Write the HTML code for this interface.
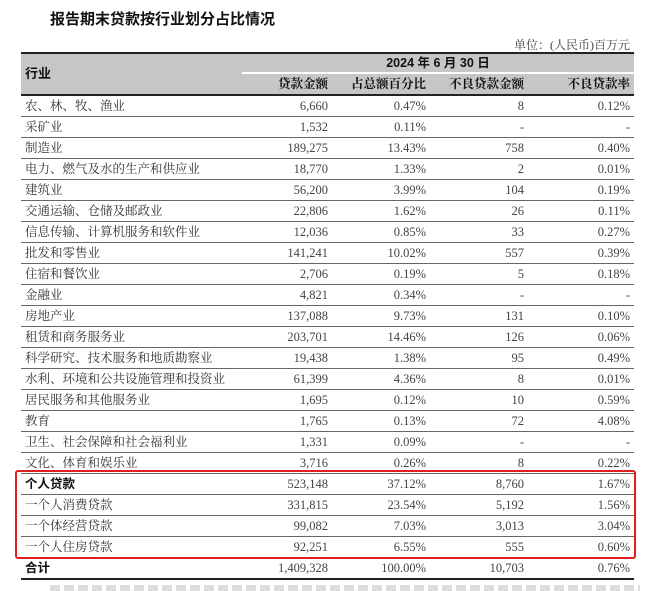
<!DOCTYPE html>
<html><head><meta charset="utf-8"><style>
body{margin:0;width:660px;height:591px;background:#fff;overflow:hidden;position:relative;font-family:"Liberation Serif","Noto Serif CJK SC",serif;color:#333}
.title{position:absolute;left:50px;top:8px;font-family:"Liberation Sans","Noto Sans CJK SC",sans-serif;font-weight:bold;font-size:15px;color:#111}
.unit{position:absolute;right:30px;top:36px;font-size:12px;color:#444}
table{position:absolute;left:21px;top:52px;width:613px;border-collapse:collapse;font-size:12.5px}
td{height:20px;padding:0 4px;border-bottom:1px solid #666;white-space:nowrap;line-height:20px}
td.n{text-align:right;font-family:"Liberation Serif",serif;color:#444}
.h td{background:#c6c6c6;font-family:"Liberation Sans","Noto Sans CJK SC",sans-serif;font-weight:bold;color:#111;border-bottom:none}
.h2 td{border-bottom:2px solid #222}
.b td:first-child{font-family:"Liberation Sans","Noto Sans CJK SC",sans-serif;font-weight:bold;color:#111}
.box{position:absolute;left:15px;top:470px;width:617px;height:85px;border:2px solid #e02020;border-radius:3px}
.foot{position:absolute;left:50px;top:585px;width:590px;height:6px;background:repeating-linear-gradient(90deg,#ddd 0 10px,#fff 10px 14px)}
</style></head><body>
<div class="title">报告期末贷款按行业划分占比情况</div>
<div class="unit">单位：(人民币)百万元</div>
<table>
<colgroup><col style="width:221px"><col style="width:90px"><col style="width:98px"><col style="width:98px"><col style="width:106px"></colgroup>
<tr class="h" style="border-top:2px solid #222"><td rowspan="2" style="border-bottom:2px solid #222;font-size:13px">行业</td><td colspan="4" style="text-align:center;border-bottom:2px solid #fff;height:18px;line-height:18px">2024 年 6 月 30 日</td></tr>
<tr class="h h2"><td class="n" style="font-family:inherit;color:#111">贷款金额</td><td class="n" style="font-family:inherit;color:#111">占总额百分比</td><td class="n" style="font-family:inherit;color:#111">不良贷款金额</td><td class="n" style="font-family:inherit;color:#111">不良贷款率</td></tr>
<tr><td>农、林、牧、渔业</td><td class="n">6,660</td><td class="n">0.47%</td><td class="n">8</td><td class="n">0.12%</td></tr>
<tr><td>采矿业</td><td class="n">1,532</td><td class="n">0.11%</td><td class="n">-</td><td class="n">-</td></tr>
<tr><td>制造业</td><td class="n">189,275</td><td class="n">13.43%</td><td class="n">758</td><td class="n">0.40%</td></tr>
<tr><td>电力、燃气及水的生产和供应业</td><td class="n">18,770</td><td class="n">1.33%</td><td class="n">2</td><td class="n">0.01%</td></tr>
<tr><td>建筑业</td><td class="n">56,200</td><td class="n">3.99%</td><td class="n">104</td><td class="n">0.19%</td></tr>
<tr><td>交通运输、仓储及邮政业</td><td class="n">22,806</td><td class="n">1.62%</td><td class="n">26</td><td class="n">0.11%</td></tr>
<tr><td>信息传输、计算机服务和软件业</td><td class="n">12,036</td><td class="n">0.85%</td><td class="n">33</td><td class="n">0.27%</td></tr>
<tr><td>批发和零售业</td><td class="n">141,241</td><td class="n">10.02%</td><td class="n">557</td><td class="n">0.39%</td></tr>
<tr><td>住宿和餐饮业</td><td class="n">2,706</td><td class="n">0.19%</td><td class="n">5</td><td class="n">0.18%</td></tr>
<tr><td>金融业</td><td class="n">4,821</td><td class="n">0.34%</td><td class="n">-</td><td class="n">-</td></tr>
<tr><td>房地产业</td><td class="n">137,088</td><td class="n">9.73%</td><td class="n">131</td><td class="n">0.10%</td></tr>
<tr><td>租赁和商务服务业</td><td class="n">203,701</td><td class="n">14.46%</td><td class="n">126</td><td class="n">0.06%</td></tr>
<tr><td>科学研究、技术服务和地质勘察业</td><td class="n">19,438</td><td class="n">1.38%</td><td class="n">95</td><td class="n">0.49%</td></tr>
<tr><td>水利、环境和公共设施管理和投资业</td><td class="n">61,399</td><td class="n">4.36%</td><td class="n">8</td><td class="n">0.01%</td></tr>
<tr><td>居民服务和其他服务业</td><td class="n">1,695</td><td class="n">0.12%</td><td class="n">10</td><td class="n">0.59%</td></tr>
<tr><td>教育</td><td class="n">1,765</td><td class="n">0.13%</td><td class="n">72</td><td class="n">4.08%</td></tr>
<tr><td>卫生、社会保障和社会福利业</td><td class="n">1,331</td><td class="n">0.09%</td><td class="n">-</td><td class="n">-</td></tr>
<tr><td>文化、体育和娱乐业</td><td class="n">3,716</td><td class="n">0.26%</td><td class="n">8</td><td class="n">0.22%</td></tr>
<tr class="b"><td>个人贷款</td><td class="n">523,148</td><td class="n">37.12%</td><td class="n">8,760</td><td class="n">1.67%</td></tr>
<tr><td>一个人消费贷款</td><td class="n">331,815</td><td class="n">23.54%</td><td class="n">5,192</td><td class="n">1.56%</td></tr>
<tr><td>一个体经营贷款</td><td class="n">99,082</td><td class="n">7.03%</td><td class="n">3,013</td><td class="n">3.04%</td></tr>
<tr><td>一个人住房贷款</td><td class="n">92,251</td><td class="n">6.55%</td><td class="n">555</td><td class="n">0.60%</td></tr>
<tr class="b"><td style="border-bottom:2px solid #222">合计</td><td class="n" style="border-bottom:2px solid #222">1,409,328</td><td class="n" style="border-bottom:2px solid #222">100.00%</td><td class="n" style="border-bottom:2px solid #222">10,703</td><td class="n" style="border-bottom:2px solid #222">0.76%</td></tr>
</table>
<div class="box"></div>
<div class="foot"></div>
</body></html>
